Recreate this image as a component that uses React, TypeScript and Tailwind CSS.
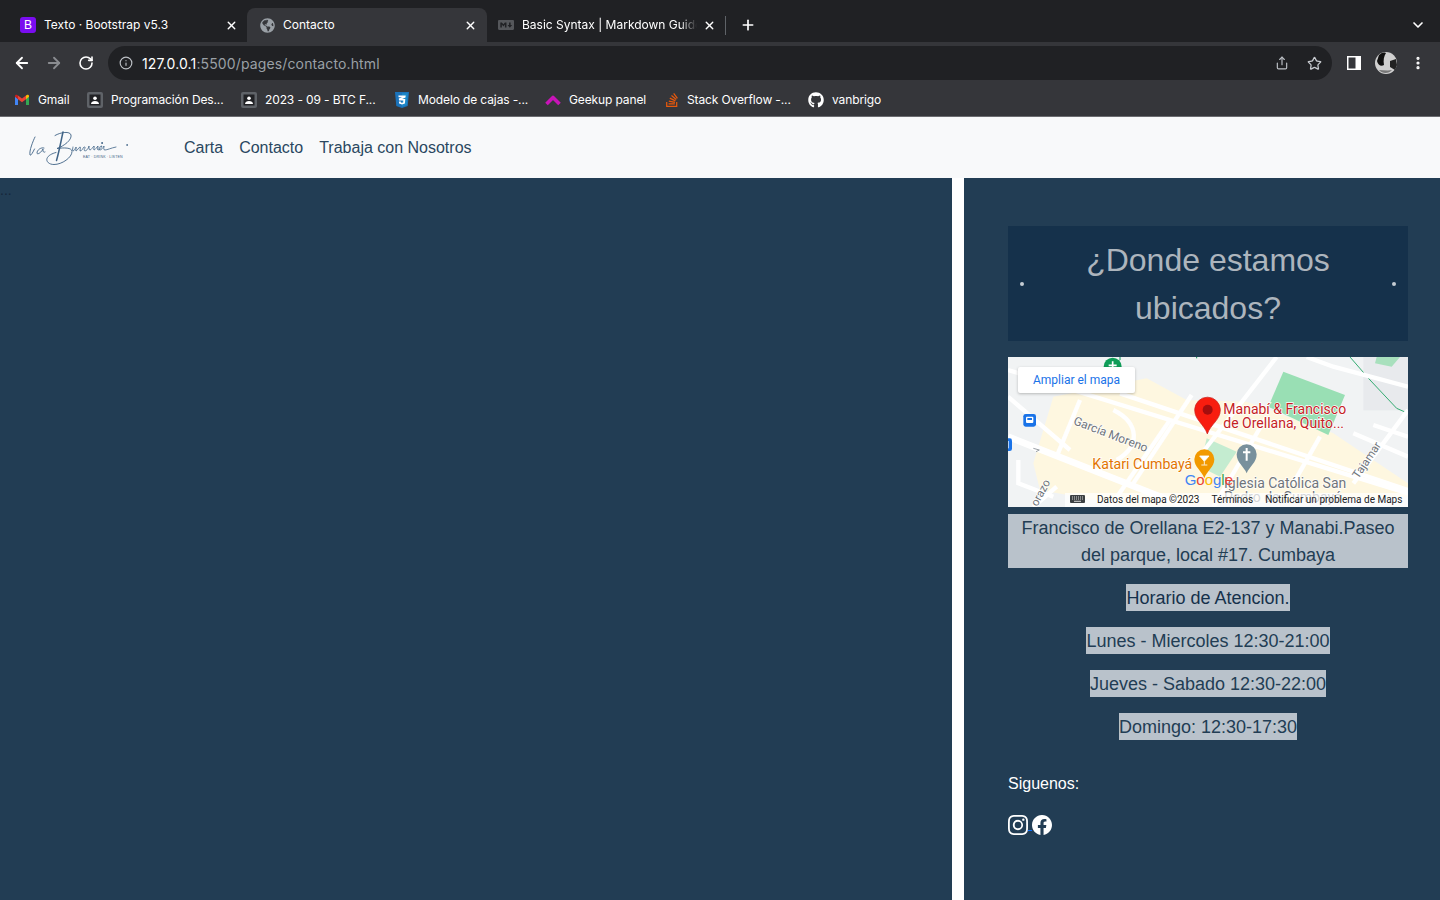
import { ArrowLeft, ArrowRight, RotateCw, Info, Share, Star, X, Plus, ChevronDown, EllipsisVertical } from "lucide-react";
import { FaGlobeAmericas, FaGithub, FaStackOverflow, FaMarkdown } from "react-icons/fa";
import { BsInstagram, BsFacebook } from "react-icons/bs";

const Doc = () => (
  <svg width="16" height="16" viewBox="0 0 16 16">
    <rect width="16" height="16" rx="2" fill="#5f6368" />
    <rect x="2.5" y="2.5" width="11" height="11" fill="#202124" />
    <circle cx="8" cy="6.2" r="1.8" fill="#fff" />
    <path d="M4 12c0-2 1.8-3 4-3s4 1 4 3z" fill="#fff" />
  </svg>
);
const Gmail = () => (
  <svg width="16" height="16" viewBox="0 0 16 16">
    <path d="M1 13V4.5L4 6.8V13z" fill="#4285f4" />
    <path d="M12 13V6.8l3-2.3V13z" fill="#34a853" />
    <path d="M4 7.2V3.5L8 6.6l4-3.1v3.7L8 10.2z" fill="#ea4335" />
    <path d="M1 4.8V4c0-1.2 1.4-1.7 2.2-1.1L4 3.5v3.7z" fill="#c5221f" />
    <path d="M15 4.8V4c0-1.2-1.4-1.7-2.2-1.1L12 3.5v3.7z" fill="#fbbc04" />
  </svg>
);
const Css = () => (
  <svg width="16" height="16" viewBox="0 0 16 16">
    <path d="M1 0h14l-1.3 14L8 16l-5.7-2z" fill="#1b73ba" />
    <path d="M8 1.2h5.8l-1 11.8L8 14.7z" fill="#1c88c7" />
    <path d="M4.4 3.4h7.3l-.2 2-3.4 1.5h3.2l-.4 4.6L8 12.6l-2.9-1-.2-2.2h1.9l.1 1 1.1.4 1.2-.4.1-1.9H5l-.2-1.9L8 5.2H4.6z" fill="#fff" />
  </svg>
);
const Geekup = () => (
  <svg width="16" height="16" viewBox="0 0 16 16">
    <path d="M1.5 12L8 5.5l6.5 6.5" fill="none" stroke="#c914b8" strokeWidth="3.6" strokeLinejoin="round" />
  </svg>
);

const bookmarks = [
  { icon: <Gmail />, label: "Gmail", w: "w-[73px] gap-2" },
  { icon: <Doc />, label: "Programación Des...", w: "w-[154px] gap-2" },
  { icon: <Doc />, label: "2023 - 09 - BTC F...", w: "w-[153px] gap-2" },
  { icon: <Css />, label: "Modelo de cajas -...", w: "w-[151px] gap-2" },
  { icon: <Geekup />, label: "Geekup panel", w: "w-[119px] gap-2" },
  { icon: <FaStackOverflow size={16} color="#e8590c" />, label: "Stack Overflow -...", w: "w-[144px] gap-[7px]" },
  { icon: <FaGithub size={16} color="#fff" />, label: "vanbrigo", w: "w-[90px] gap-2" },
];

function BrowserChrome() {
  return (
    <div className="font-['Inter',sans-serif] text-white text-[12px]">
      <div className="flex h-[42px] bg-[#202124] pt-2">
        <div className="flex w-[239px] ml-2 items-center pl-3 pr-[9px]">
          <span className="w-4 h-4 rounded-[3px] bg-[#7a0df0] flex items-center justify-center text-[12px] leading-none font-['Liberation_Sans',sans-serif]">B</span>
          <span className="ml-2 flex-1 whitespace-nowrap">Texto · Bootstrap v5.3</span>
          <X size={13} strokeWidth={2.5} />
        </div>
        <div className="flex w-[240px] h-[34px] items-center bg-[#35363a] rounded-t-lg pl-[13px] pr-[10px]">
          <FaGlobeAmericas size={15} color="#9aa0a6" />
          <span className="ml-2 flex-1">Contacto</span>
          <X size={13} strokeWidth={2.5} />
        </div>
        <div className="flex w-[240px] items-center pl-[11px]">
          <FaMarkdown size={16} color="#55575b" className="shrink-0" />
          <span className="ml-2 w-[175px] shrink-0 overflow-hidden whitespace-nowrap [mask-image:linear-gradient(to_right,#000_90%,transparent)]">Basic Syntax | Markdown Guide</span>
          <X size={13} strokeWidth={2.5} className="ml-[6px] shrink-0" />
          <span className="ml-[9px] w-px h-[19px] bg-[#5f6368] shrink-0" />
        </div>
        <div className="flex flex-1 items-center">
          <Plus size={16} strokeWidth={2.5} className="ml-[13px]" />
          <ChevronDown size={16} strokeWidth={2.5} className="ml-auto mr-[14px]" />
        </div>
      </div>
      <div className="flex h-[42px] items-center bg-[#35363a] pl-[13px] pr-[14px]">
        <ArrowLeft size={18} strokeWidth={2.4} />
        <ArrowRight size={18} strokeWidth={2.4} color="#8a8c90" className="ml-[14px]" />
        <RotateCw size={16} strokeWidth={2.4} className="ml-[15px]" />
        <div className="ml-[14px] flex flex-1 h-[34px] items-center rounded-full bg-[#202124] pl-[11px] pr-[10px]">
          <Info size={14} color="#bdc1c6" />
          <span className="ml-[9px] text-[14px] tracking-[0.13px] text-[#9aa0a6]"><span className="text-white">127.0.0.1</span>:5500/pages/contacto.html</span>
          <Share size={14} color="#bdc1c6" className="ml-auto" />
          <Star size={15} color="#c8cbd0" strokeWidth={2} className="ml-[18px]" />
        </div>
        <svg width="14" height="14" viewBox="0 0 14 14" className="ml-[15px]">
          <rect width="14" height="14" fill="#fff" />
          <rect x="1.5" y="1.5" width="7" height="11" fill="#35363a" />
        </svg>
        <svg width="22" height="22" viewBox="0 0 22 22" className="ml-[14px]">
          <circle cx="11" cy="11" r="11" fill="#d0d0d0" />
          <path d="M4 3c3-3 6-3 7-2 -2 3-3 7-2 12-3 2-6 0-7-4z" fill="#111" />
          <path d="M15 9l6-2 1 6-2 5-5-3z" fill="#222" />
          <path d="M4 18c4 0 9 1 13 0-3 4-10 4-13 0z" fill="#777" />
        </svg>
        <EllipsisVertical size={16} strokeWidth={2.8} className="ml-[13px]" />
      </div>
      <div className="flex h-[32px] items-center bg-[#35363a] pl-[14px] tracking-[-0.12px]">
        {bookmarks.map((b) => (
          <div key={b.label} className={`${b.w} flex items-center whitespace-nowrap`}>
            {b.icon}
            <span>{b.label}</span>
          </div>
        ))}
      </div>
      <div className="h-px bg-[#6b6c70]" />
    </div>
  );
}

function Logo() {
  return (
    <div className="relative w-[100px] h-[36px]">
      <svg width="100" height="36" viewBox="0 0 100 36" fill="none" stroke="#3f6386" strokeWidth="0.9" strokeLinecap="round" strokeLinejoin="round">
        <path d="M7 7C5 11 1 21 2 25c1 1 3-3 4.500-6" />
        <path d="M16 18c-3-1-7 2-7 5 0 2 4 0 6-4 0 2 0 4 2 3" />
        <path d="M27 5.500C33 2 42 1 43 5c1 5-7 11-14 13.500 7-1 15-1 15 3 0 6-10 13-18 13-5 0-8-3-7-6 1-3 5-5 9-6" />
        <path d="M35 2c-2 9-4 20-6.500 28.500" strokeWidth="1.5" />
        <path d="M45 17c0 1-1 3 0 4 1 0 2-2 3-4 1 0-1 4 0 4s3-4 4-4 0 1 0 4c2 0 3-3 4-4 2 0 1 1 0 3 1 2 4 0 5-4 0 2 0 4 1 4 1 0 3-3 4-4 1 0-1 4 0 4s3-3 4-4c0 1-1 4 0 4 1 0 3-2 4-4-3 0-4 4-2 4 1 0 3-2 4-4 0 2-1 4 1 4s6-2 11-3" strokeWidth="0.8" />
        <circle cx="74" cy="13" r="0.5" fill="#3f6386" />
        <circle cx="99" cy="15" r="0.4" />
      </svg>
      <span className="absolute left-[55px] top-[25px] text-[3.6px] tracking-[0.15px] text-[#3f6386] font-['Liberation_Sans',sans-serif] whitespace-nowrap">EAT · DRINK · LISTEN</span>
    </div>
  );
}

function Navbar() {
  return (
    <nav className="flex h-[61px] items-center bg-[#f8f9fa] pl-[28px]">
      <Logo />
      <div className="ml-[56px] flex gap-4 text-[16px] text-[#2a4760]">
        <a>Carta</a>
        <a>Contacto</a>
        <a>Trabaja con Nosotros</a>
      </div>
    </nav>
  );
}

function MapBox() {
  const roads = [
    "M24 60L1224 430",
    "M24 260L560 471",
    "M360 130L1224 420",
    "M575 135L400 400",
    "M830 21L590 330",
    "M510 210L330 471",
    "M920 21L1000 50L1224 110",
    "M800 200L640 471",
    "M1224 180L1060 400",
    "M24 140L210 300",
    "M240 150L170 320",
    "M340 180C420 220 420 290 350 330",
    "M1060 250L1224 320",
    "M1120 225L1224 260",
    "M960 260L880 400",
    "M170 410L100 471",
    "M55 330L55 400L160 440",
  ];
  const halo = { stroke: "#fff", strokeWidth: 4, paintOrder: "stroke" as const };
  return (
    <div className="relative mt-4 h-[150px] overflow-hidden bg-[#f1f3f4] font-['Roboto',sans-serif]">
      <svg width="400" height="150" viewBox="24 21 1200 450" className="block">
        <rect x="1090" y="21" width="140" height="160" fill="#e8eaed" />
        <path d="M160 140L440 85L560 150L740 155L1000 250L1060 290L1224 400V440L700 460L400 471L120 420L100 340Z" fill="#fef7e0" />
        <path d="M850 65L1035 135L985 255L805 170Z" fill="#99dfb4" />
        <path d="M1130 21H1200L1175 50L1125 40Z" fill="#a8e0bd" />
        <path d="M620 265L710 305L660 380L600 350Z" fill="#c4ecd0" />
        <path d="M1050 21L1110 90L1190 175L1224 190" fill="none" stroke="#0f9d58" strokeWidth="2.5" />
        <path d="M360 21V30M590 21V25" stroke="#0f9d58" strokeWidth="3" />
        <g fill="none" stroke="#fff" strokeWidth="13">
          {roads.map((d) => <path key={d} d={d} />)}
        </g>
        <path d="M24 260L560 471" fill="none" stroke="#fff" strokeWidth="20" />
        <path d="M100 295l18 5-10 5" fill="none" stroke="#9aa0a6" strokeWidth="3" />
        <circle cx="338" cy="50" r="27" fill="#0f9d58" />
        <path d="M338 34v28M326 46h24" stroke="#fff" strokeWidth="5" />
        <rect x="70" y="192" width="38" height="38" rx="7" fill="#1a73e8" />
        <rect x="78" y="200" width="22" height="19" rx="3" fill="#fff" />
        <rect x="82" y="204" width="14" height="6" fill="#1a73e8" />
        <rect x="10" y="265" width="26" height="38" rx="7" fill="#1a73e8" />
        <rect x="14" y="273" width="12" height="22" fill="#fff" />
        <path d="M622 252C612 222 584 210 584 180a38 38 0 0 1 77 0C661 210 632 222 622 252Z" fill="#f81d0f" stroke="#c5221f" strokeWidth="2" />
        <circle cx="623" cy="179" r="15" fill="#a50e0e" />
        <path d="M613 385C605 362 583 352 583 328a30 30 0 0 1 60 0C643 352 621 362 613 385Z" fill="#f29900" />
        <path d="M599 318h28l-14 16zM613 334v10M604 345h18" fill="#fff" stroke="#fff" strokeWidth="2.500" />
        <path d="M740 370C732 350 710 338 710 313a30 30 0 0 1 60 0C770 338 748 350 740 370Z" fill="#78909c" />
        <path d="M740 294v38M729 307h22" stroke="#fff" strokeWidth="6" />
        <g fontFamily="Roboto, sans-serif">
          <text x="670" y="192" fontSize="42" fill="#c5221f" {...halo}>Manabí &amp; Francisco</text>
          <text x="670" y="235" fontSize="42" fill="#c5221f" {...halo}>de Orellana, Quito...</text>
          <text x="277" y="356" fontSize="42.500" fill="#e37400" {...halo}>Katari Cumbayá</text>
          <text x="672" y="413" fontSize="42" fill="#70757a" {...halo}>Iglesia Católica San</text>
          <text x="672" y="456" fontSize="42" fill="#70757a" {...halo}>Pedro de Cumbayá</text>
          <text transform="translate(218 222) rotate(21)" fontSize="36" fill="#70757a" {...halo}>García Moreno</text>
          <text transform="translate(1075 388) rotate(-56)" fontSize="34" fill="#70757a" {...halo}>Tajamar</text>
          <text transform="translate(112 471) rotate(-62)" fontSize="34" fill="#70757a" {...halo}>orazo</text>
          <text x="554" y="406" fontSize="45" fontFamily="Liberation Sans, sans-serif">
            <tspan fill="#4285f4">G</tspan><tspan fill="#ea4335">o</tspan><tspan fill="#fbbc04">o</tspan><tspan fill="#4285f4">g</tspan><tspan fill="#34a853">l</tspan><tspan fill="#ea4335">e</tspan>
          </text>
        </g>
      </svg>
      <div className="absolute left-[10px] top-[10px] flex h-[26px] w-[117px] items-center justify-center rounded-[2px] bg-white text-[12px] text-[#1a73e8] shadow-[0_1px_3px_rgba(0,0,0,0.25)]">Ampliar el mapa</div>
      <div className="absolute bottom-0 left-[57px] right-0 flex h-[14px] items-center bg-white/70 pb-[2px] text-[10px] text-[#202124] whitespace-nowrap">
        <svg width="15" height="8" viewBox="0 0 15 8" className="ml-[5px] shrink-0">
          <rect width="15" height="8" rx="1" fill="#3c4043" />
          <path d="M2 2h11M2 4h11" stroke="#fff" strokeWidth="0.8" strokeDasharray="1 1" />
          <path d="M4 6.300h7" stroke="#fff" strokeWidth="0.8" />
        </svg>
        <span className="ml-[12px]">Datos del mapa ©2023</span>
        <span className="ml-[12px]">Términos</span>
        <span className="ml-[12px]">Notificar un problema de Maps</span>
      </div>
    </div>
  );
}

function Sidebar() {
  const hours = ["Lunes - Miercoles 12:30-21:00", "Jueves - Sabado 12:30-22:00", "Domingo: 12:30-17:30"];
  return (
    <aside className="flex w-[476px] flex-col bg-[#223d54] pl-[44px] pr-8 pt-12">
      <div className="flex h-[115px] items-center bg-[#15314b] px-3 text-[#adb5bd]">
        <span className="w-1 h-1 rounded-full bg-[#c5ccd3]" />
        <h2 className="flex-1 text-center text-[32px] leading-[48px] pt-px">¿Donde estamos<br />ubicados?</h2>
        <span className="w-1 h-1 rounded-full bg-[#c5ccd3]" />
      </div>
      <MapBox />
      <p className="mt-[7px] h-[54px] bg-[#b9c2cb] pt-px text-center text-[18px] leading-[27px] text-[#223d54]">
        Francisco de Orellana E2-137 y Manabi.Paseo<br />del parque, local #17. Cumbaya
      </p>
      <div className="mt-4 flex flex-col items-center gap-4 text-[18px] leading-[27px] text-[#223d54]">
        <span className="h-[27px] bg-[#b9c2cb] pt-px text-[#15314b]">Horario de Atencion.</span>
        {hours.map((h) => <span key={h} className="h-[27px] bg-[#b9c2cb] pt-px">{h}</span>)}
      </div>
      <p className="mt-8 text-[16px] leading-6 text-white">Siguenos:</p>
      <div className="mt-[19px] flex items-center text-white">
        <BsInstagram size={20} />
        <span className="mt-[10px] h-px w-1 bg-[#0d6efd]" />
        <BsFacebook size={20} />
      </div>
    </aside>
  );
}

export default function App() {
  return (
    <div className="flex h-[900px] flex-col overflow-hidden bg-white font-['Liberation_Sans',sans-serif]">
      <BrowserChrome />
      <Navbar />
      <main className="flex flex-1 justify-between">
        <div className="w-[952px] bg-[#223d54] text-[14px] leading-[24px] text-[#15263a]">...</div>
        <Sidebar />
      </main>
    </div>
  );
}
